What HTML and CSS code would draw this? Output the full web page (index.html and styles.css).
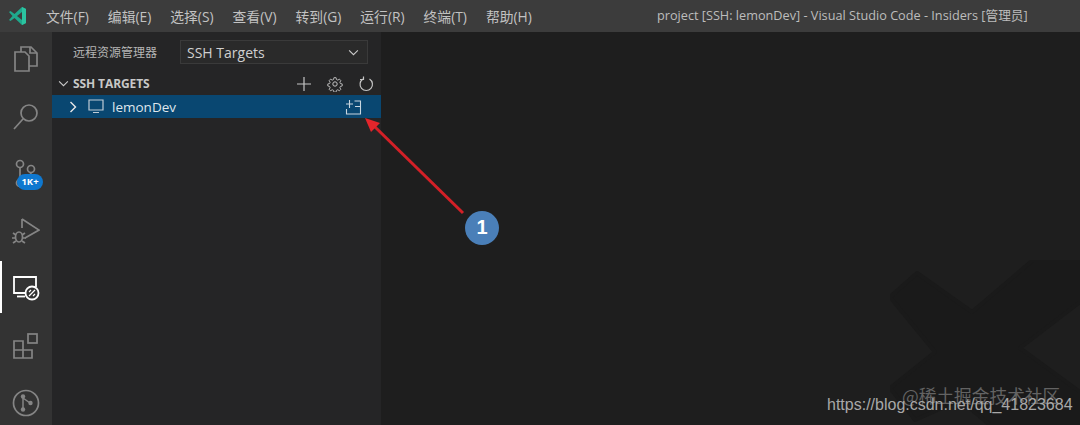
FILE: index.html
```html
<!DOCTYPE html>
<html lang="zh">
<head>
<meta charset="utf-8">
<title>project</title>
<link rel="stylesheet" href="styles.css">
</head>
<body>
<div class="window">
  <header class="titlebar">
    <svg class="logo" viewBox="0 0 20 20" width="20" height="20">
      <path d="M1 6l1.500-1 4 3L14 1l4 2v14l-4 2-7.500-7-4 3L1 14l3.500-4z" fill="#1fa98d"/>
      <path d="M14 6l-5 4 5 4z" fill="#3c3c3c"/>
      <path d="M14 1l4 2v14l-4 2z" fill="#2bc4a0"/>
    </svg>
    <nav class="menu">
      <span>文件(F)</span><span>编辑(E)</span><span>选择(S)</span><span>查看(V)</span><span>转到(G)</span><span>运行(R)</span><span>终端(T)</span><span>帮助(H)</span>
    </nav>
    <div class="wintitle">project [SSH: lemonDev] - Visual Studio Code - Insiders [管理员]</div>
  </header>
  <div class="main">
    <aside class="activity">
      <div class="act">
        <svg viewBox="0 0 26 28" width="26" height="28" fill="none" stroke="#858585" stroke-width="1.700"><path d="M8 7V2h10l6 6v13H16"/><path d="M17 2v6h7"/><path d="M8 7H2v19h14V11l-4-4z"/></svg>
      </div>
      <div class="act">
        <svg viewBox="0 0 26 28" width="26" height="28" fill="none" stroke="#858585" stroke-width="1.700"><circle cx="16" cy="11" r="8"/><path d="M10 17L1 27"/></svg>
      </div>
      <div class="act">
        <svg viewBox="0 0 26 30" width="26" height="30" fill="none" stroke="#858585" stroke-width="1.700"><circle cx="7" cy="5" r="3.500"/><circle cx="18" cy="10" r="3.500"/><circle cx="7" cy="24" r="3.500"/><path d="M7 9v12M18 14c0 3-6 3-11 6"/></svg>
        <span class="badge">1K+</span>
      </div>
      <div class="act">
        <svg viewBox="0 0 28 28" width="28" height="28" fill="none" stroke="#858585" stroke-width="1.700"><path d="M10 2l17 11-14 8M10 2v9"/><ellipse cx="7" cy="20" rx="3.500" ry="5"/><path d="M1 16l3 2M13 16l-3 2M0 21h3M11 21h3M1 26l3-2M13 26l-3-2"/></svg>
      </div>
      <div class="act active">
        <svg viewBox="0 0 28 26" width="28" height="26" fill="none" stroke="#fff" stroke-width="1.800"><path d="M14 18H2V2h22v10"/><path d="M5 21.500h8"/><circle cx="20" cy="18" r="6.500" fill="#333"/><path d="M17 21l6-6" stroke-width="1.200"/><path d="M17 17l2-2M21 21l2-2" stroke-width="1.200"/></svg>
      </div>
      <div class="act">
        <svg viewBox="0 0 28 28" width="28" height="28" fill="none" stroke="#858585" stroke-width="1.700"><path d="M2 9h9v9h9v8H2zM2 18h9v8"/><rect x="16" y="2" width="9" height="9"/></svg>
      </div>
      <div class="act">
        <svg viewBox="0 0 28 28" width="28" height="28" fill="none" stroke="#858585" stroke-width="1.700"><circle cx="14" cy="14" r="12.500"/><g fill="#858585" stroke="none"><circle cx="11" cy="7.500" r="2.200"/><circle cx="11" cy="20.500" r="2.200"/><circle cx="18.500" cy="14" r="2.200"/></g><path d="M11 8v12M11 9l7 5" stroke-width="1.500"/></svg>
      </div>
    </aside>
    <section class="sidebar">
      <div class="sidehead">
        <span class="sidetitle">远程资源管理器</span>
        <div class="select">
          <span>SSH Targets</span>
          <svg viewBox="0 0 12 8" width="11" height="7" fill="none" stroke="#ccc" stroke-width="1.200"><path d="M1 1.500l5 5 5-5"/></svg>
        </div>
      </div>
      <div class="secthead">
        <svg class="twist" viewBox="0 0 12 8" width="11" height="7" fill="none" stroke="#ccc" stroke-width="1.200"><path d="M1 1.500l5 5 5-5"/></svg>
        <span class="secttitle">SSH TARGETS</span>
        <div class="tools">
          <svg viewBox="0 0 16 16" width="16" height="16" fill="none" stroke="#c5c5c5" stroke-width="1.200"><path d="M8 1v14M1 8h14"/></svg>
          <svg viewBox="0 0 16 16" width="16" height="16" fill="none" stroke="#c5c5c5" stroke-width="1"><circle cx="8" cy="8" r="2.200"/><path d="M6.800 1h2.400l.4 2 1.500.7 1.800-1.100 1.600 1.700-1.100 1.700.6 1.500 2 .4v2.300l-2 .5-.6 1.500 1.100 1.700-1.600 1.600-1.800-1.100-1.500.7-.4 2H6.800l-.4-2-1.500-.7-1.800 1.100-1.600-1.600 1.100-1.700-.6-1.500-2-.5V7.900l2-.4.6-1.500-1.100-1.700 1.600-1.700 1.800 1.100 1.500-.7z" transform="translate(.8 .8) scale(.9)"/></svg>
          <svg viewBox="0 0 16 16" width="16" height="16" fill="none" stroke="#c5c5c5" stroke-width="1.200"><path d="M5 3A6.200 6.200 0 1 0 11.500 3"/><path d="M5.500 .5V3.500H2"/></svg>
        </div>
      </div>
      <div class="row">
        <svg class="chev" viewBox="0 0 8 12" width="8" height="12" fill="none" stroke="#e8e8e8" stroke-width="1.400"><path d="M1.500 1l5 5-5 5"/></svg>
        <svg class="mon" viewBox="0 0 16 15" width="16" height="15" fill="none" stroke="#c0ccd6" stroke-width="1.200"><path d="M1 1h14v10H1zM5 13.500h6"/></svg>
        <span class="rowname">lemonDev</span>
        <svg class="newwin" viewBox="0 0 18 16" width="18" height="16" fill="none" stroke="#c9d6df" stroke-width="1.100"><path d="M1.500 10v5h14V2H9.500M10 7.500h5.500M1 5h7M4.500 1v8"/></svg>
      </div>
    </section>
    <section class="editor"></section>
  </div>
  <svg class="bgmark" viewBox="0 0 190 165" width="190" height="165">
    <path d="M0 37L27 13 82 52 143 0h47v42l-60 46 60 44v33h-90L70 140 25 160 0 128 45 92z" fill="#1a1a1a" stroke="#1a1a1a" stroke-width="4" stroke-linejoin="round"/>
  </svg>
  <svg class="arrow" viewBox="0 0 110 100" width="110" height="100">
    <path d="M98 96L9 9" stroke="#d32027" stroke-width="3" fill="none"/>
    <path d="M0 1l15 5-9 9z" fill="#e4252b"/>
  </svg>
  <div class="step">1</div>
  <div class="mark-a">@稀土掘金技术社区</div>
  <div class="mark-b">https://blog.csdn.net/qq_41823684</div>
</div>
</body>
</html>
```
FILE: styles.css
```css
* { box-sizing: border-box; }
html, body { margin: 0; padding: 0; }
body { width: 1080px; height: 425px; overflow: hidden; background: #1e1e1e; font-family: "Open Sans", "Noto Sans CJK SC", sans-serif; }
.window { position: relative; width: 1080px; height: 425px; overflow: hidden; display: flex; flex-direction: column; }
.titlebar { height: 32px; flex: none; background: #3c3c3c; display: flex; align-items: center; padding-left: 8px; position: relative; }
.logo { flex: none; }
.menu { display: flex; gap: 19px; margin-left: 18px; color: #c2c2c2; font-size: 13.800px; line-height: 31px; }
.menu span { white-space: nowrap; }
.wintitle { position: absolute; left: 657px; top: 0; line-height: 31px; font-size: 12.700px; color: #bdbdbd; white-space: nowrap; }
.main { flex: 1; display: flex; min-height: 0; }
.activity { width: 52px; flex: none; background: #333; display: flex; flex-direction: column; overflow: hidden; }
.act { height: 57.300px; flex: none; display: flex; align-items: center; justify-content: center; position: relative; }
.act:first-child { margin-top: -1.600px; }
.act.active::before { content: ""; position: absolute; left: 0; top: 1.500px; width: 2px; height: 52px; background: #fff; }
.badge { position: absolute; left: 17px; top: 29px; width: 26px; height: 16px; border-radius: 8px; background: #0f78cf; color: #fff; font: 700 9.500px/16px "Open Sans", sans-serif; text-align: center; }
.sidebar { width: 329px; flex: none; background: #252526; }
.sidehead { height: 40px; display: flex; align-items: center; padding-left: 21px; }
.sidetitle { width: 107px; flex: none; font-size: 12px; color: #b5b5b5; white-space: nowrap; }
.select { width: 188px; height: 24px; border: 1px solid #3a3a3a; background: #2a2a2a; display: flex; align-items: center; justify-content: space-between; padding: 0 8px 0 6px; font-size: 14px; color: #d0d0d0; }
.secthead { height: 23px; display: flex; align-items: center; padding-left: 6px; }
.twist { flex: none; }
.secttitle { margin-left: 4px; font-size: 12px; font-weight: 700; color: #c8c8c8; letter-spacing: -.1px; }
.tools { margin-left: auto; display: flex; gap: 15px; padding-right: 7px; }
.row { height: 23px; background: #094771; display: flex; align-items: center; padding-left: 17px; }
.chev { flex: none; }
.mon { flex: none; margin-left: 11px; }
.rowname { margin-left: 8px; font-size: 13.500px; color: #dfe6ec; }
.newwin { flex: none; margin-left: auto; margin-right: 18px; }
.editor { flex: 1; background: #1e1e1e; }
.bgmark { position: absolute; left: 890px; top: 260px; }
.arrow { position: absolute; left: 365px; top: 117px; }
.step { position: absolute; left: 465px; top: 211px; width: 34px; height: 34px; border-radius: 50%; background: #4a7fb8; color: #fff; font: 700 20px/33px "Liberation Sans", sans-serif; text-align: center; }
.mark-a { position: absolute; left: 902px; top: 383px; font-size: 17.700px; line-height: 24px; color: #636363; font-family: "Noto Sans CJK SC", sans-serif; white-space: nowrap; }
.mark-b { position: absolute; left: 827px; top: 395px; font-size: 16px; line-height: 20px; color: #a8a8a8; font-family: "Liberation Sans", sans-serif; white-space: nowrap; }
```
